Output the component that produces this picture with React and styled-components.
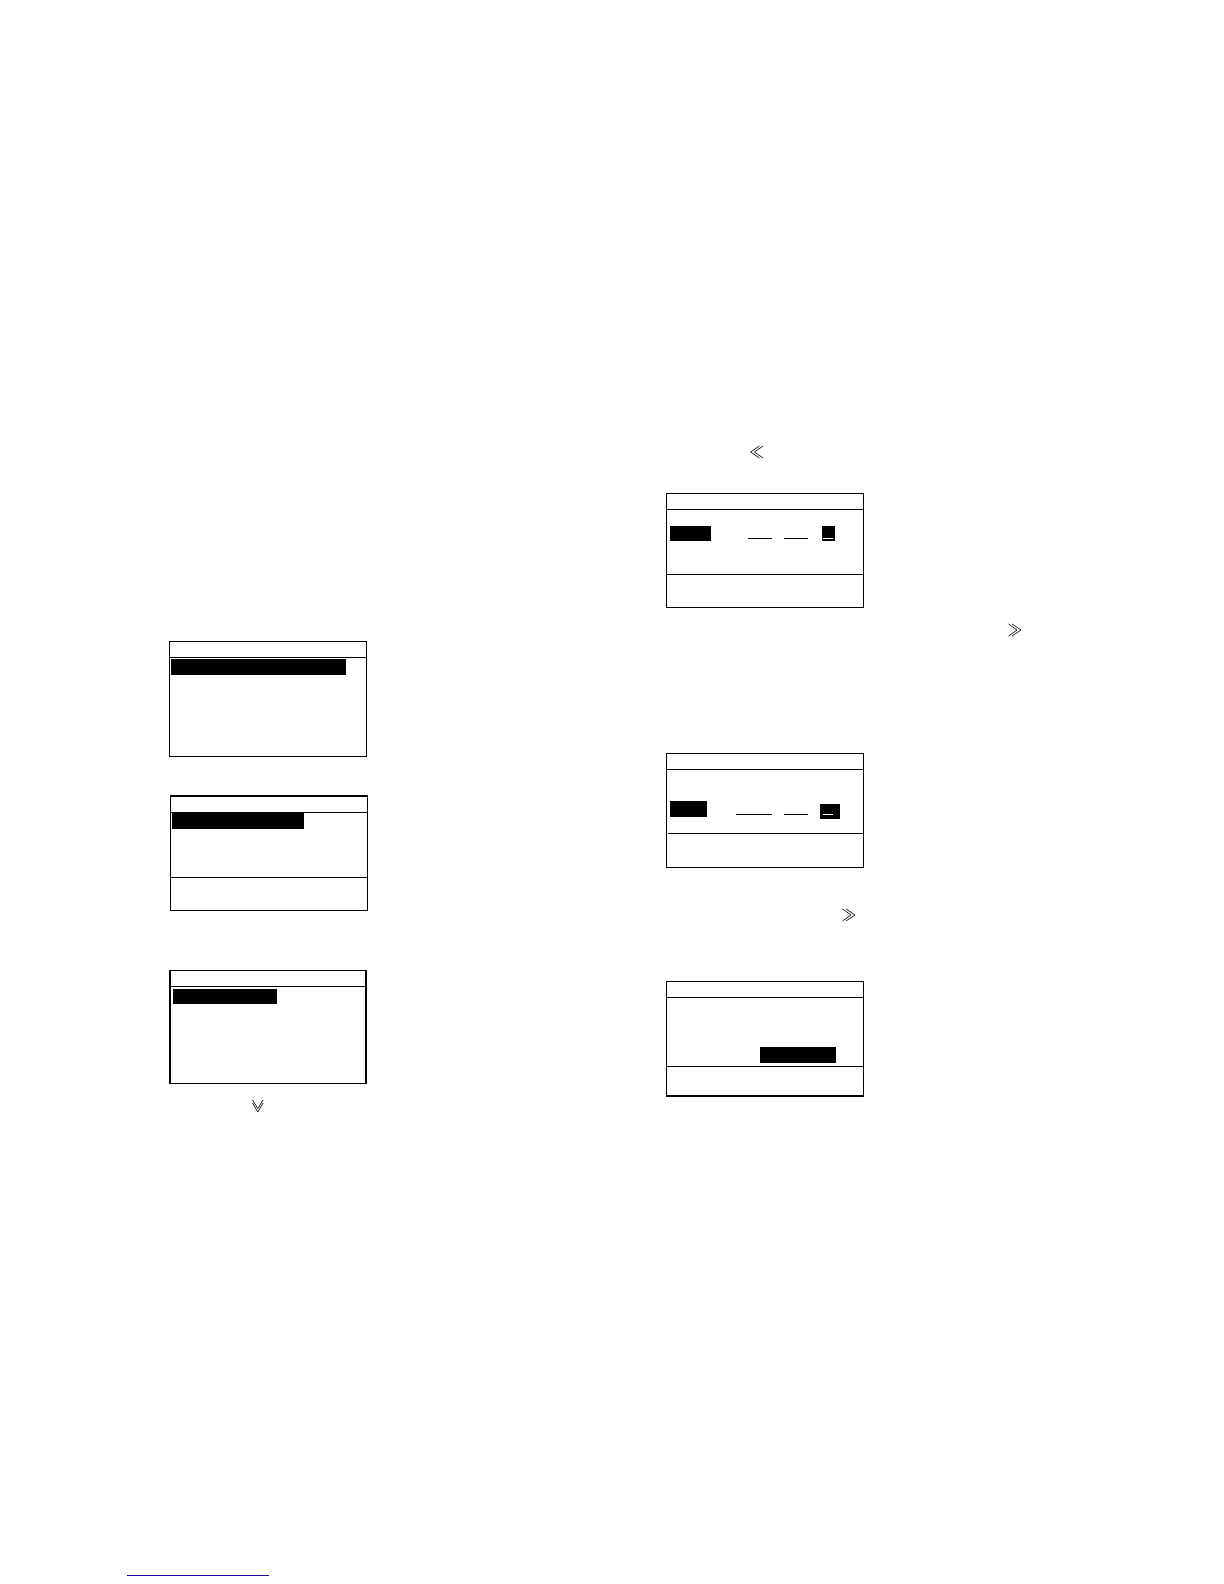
import React from "react";
import styled, { createGlobalStyle } from "styled-components";

const GlobalStyle = createGlobalStyle`
  *, *::before, *::after { box-sizing: border-box; }
  body {
    margin: 0;
    background: #fff;
    color: #000;
    font-family: "Liberation Sans", Arial, sans-serif;
  }
`;

const Page = styled.div`
  display: flex;
  flex-direction: column;
  min-height: 100vh;
`;

const Spread = styled.main`
  flex: 1;
  display: grid;
  grid-template-columns: 1fr 1fr;
`;

const Column = styled.section`
  display: flex;
  flex-direction: column;
  align-items: flex-start;
  padding: ${(p) => p.$top}px 0 0 ${(p) => p.$left}px;
`;

const Screen = styled.article`
  display: flex;
  flex-direction: column;
  width: 198px;
  margin-bottom: ${(p) => p.$after || 0}px;
  border: solid #000;
  border-width: ${(p) => p.$border || "1px"};
`;

const TitleBar = styled.header`
  height: 16px;
  border-bottom: 1px solid #000;
`;

const Body = styled.div`
  height: ${(p) => p.$height}px;
  padding: ${(p) => p.$pad || "0"};
`;

const SoftKeys = styled.footer`
  height: ${(p) => p.$height}px;
  margin-left: ${(p) => (p.$inset ? 1 : 0)}px;
  border-top: 1px solid #000;
`;

const Highlight = styled.div`
  flex: none;
  width: ${(p) => p.$width}px;
  height: ${(p) => p.$height || 16}px;
  background: #000;
`;

const EntryRow = styled.div`
  display: flex;
  align-items: flex-start;
`;

const Fields = styled.div`
  display: flex;
  gap: 12px;
  margin: 0 ${(p) => p.$after}px 0 ${(p) => p.$before}px;
`;

const Blank = styled.input`
  display: block;
  width: ${(p) => p.$width}px;
  height: ${(p) => p.$height}px;
  padding: 0;
  border: 0;
  border-bottom: 1px solid ${(p) => (p.$inverse ? "#fff" : "#000")};
  border-radius: 0;
  outline: 0;
  background: transparent;
  color: inherit;
  font: 12px "Liberation Sans", Arial, sans-serif;
`;

const Cursor = styled.div`
  height: 15px;
  margin-top: ${(p) => p.$drop || 0}px;
  padding: ${(p) => p.$pad};
  background: #000;
  color: #fff;
`;

const Step = styled.div`
  display: flex;
  padding-left: ${(p) => p.$indent}px;
  margin-bottom: ${(p) => p.$after || 0}px;
`;

const Icon = styled.svg`
  display: block;
  width: 14px;
  height: 14px;
  fill: none;
  stroke: #1c1c1c;
  stroke-width: 1;
`;

const LinkRule = styled.hr`
  width: 142px;
  height: 1px;
  margin: 0 0 8px 127px;
  border: 0;
  background: #140c98;
`;

const chevrons = {
  left: "M10.5 1L1.5 7l9 6M14 1L5.5 7l8.5 6",
  right: "M4 1l9 6-9 6M.5 1L9 7 .5 13",
  down: "M1.5 4l5.3 9 5.3-9M1.5 1l5.3 8.5L12.1 1",
};

function Chevrons({ to }) {
  return (
    <Icon viewBox="0 0 14 14" aria-hidden="true">
      <path d={chevrons[to]} />
    </Icon>
  );
}

export default function App() {
  return (
    <>
      <GlobalStyle />
      <Page>
        <Spread>
          <Column $top={641} $left={169}>
            <Screen $after={38}>
              <TitleBar />
              <Body $height={98} $pad="1px">
                <Highlight $width={175} />
              </Body>
            </Screen>
            <Step $indent={1}>
              <Screen $after={59} $border="2px 1px 1px">
                <TitleBar />
                <Body $height={64} $pad="0 1px">
                  <Highlight $width={132} />
                </Body>
                <SoftKeys $height={33} />
              </Screen>
            </Step>
            <Screen $after={15} $border="1px 2px">
              <TitleBar />
              <Body $height={96} $pad="2px">
                <Highlight $width={104} $height={15} />
              </Body>
            </Screen>
            <Step $indent={82}>
              <Chevrons to="down" />
            </Step>
          </Column>

          <Column $top={445} $left={54}>
            <Step $indent={83} $after={34}>
              <Chevrons to="left" />
            </Step>
            <Screen $after={15}>
              <TitleBar />
              <Body $height={64} $pad="16px 3px 0">
                <EntryRow>
                  <Highlight $width={41} $height={15} />
                  <Fields $before={37} $after={14}>
                    <Blank $width={24} $height={13} aria-label="Hour" />
                    <Blank $width={24} $height={13} aria-label="Minute" />
                  </Fields>
                  <Cursor $pad="0 2px 0 1px">
                    <Blank $width={10} $height={13} $inverse aria-label="Second" />
                  </Cursor>
                </EntryRow>
              </Body>
              <SoftKeys $height={33} />
            </Screen>
            <Step $indent={342} $after={116}>
              <Chevrons to="right" />
            </Step>
            <Screen $after={40}>
              <TitleBar />
              <Body $height={63} $pad="31px 3px 0">
                <EntryRow>
                  <Highlight $width={37} />
                  <Fields $before={29} $after={12}>
                    <Blank $width={36} $height={14} aria-label="Year" />
                    <Blank $width={24} $height={14} aria-label="Month" />
                  </Fields>
                  <Cursor $drop={3} $pad="0 7px 0 3px">
                    <Blank $width={10} $height={11} $inverse aria-label="Day" />
                  </Cursor>
                </EntryRow>
              </Body>
              <SoftKeys $height={34} $inset />
            </Screen>
            <Step $indent={176} $after={59}>
              <Chevrons to="right" />
            </Step>
            <Screen $border="1px 1px 2px">
              <TitleBar />
              <Body $height={68} $pad="49px 0 0 93px">
                <Highlight $width={76} />
              </Body>
              <SoftKeys $height={29} />
            </Screen>
          </Column>
        </Spread>
        <LinkRule />
      </Page>
    </>
  );
}
